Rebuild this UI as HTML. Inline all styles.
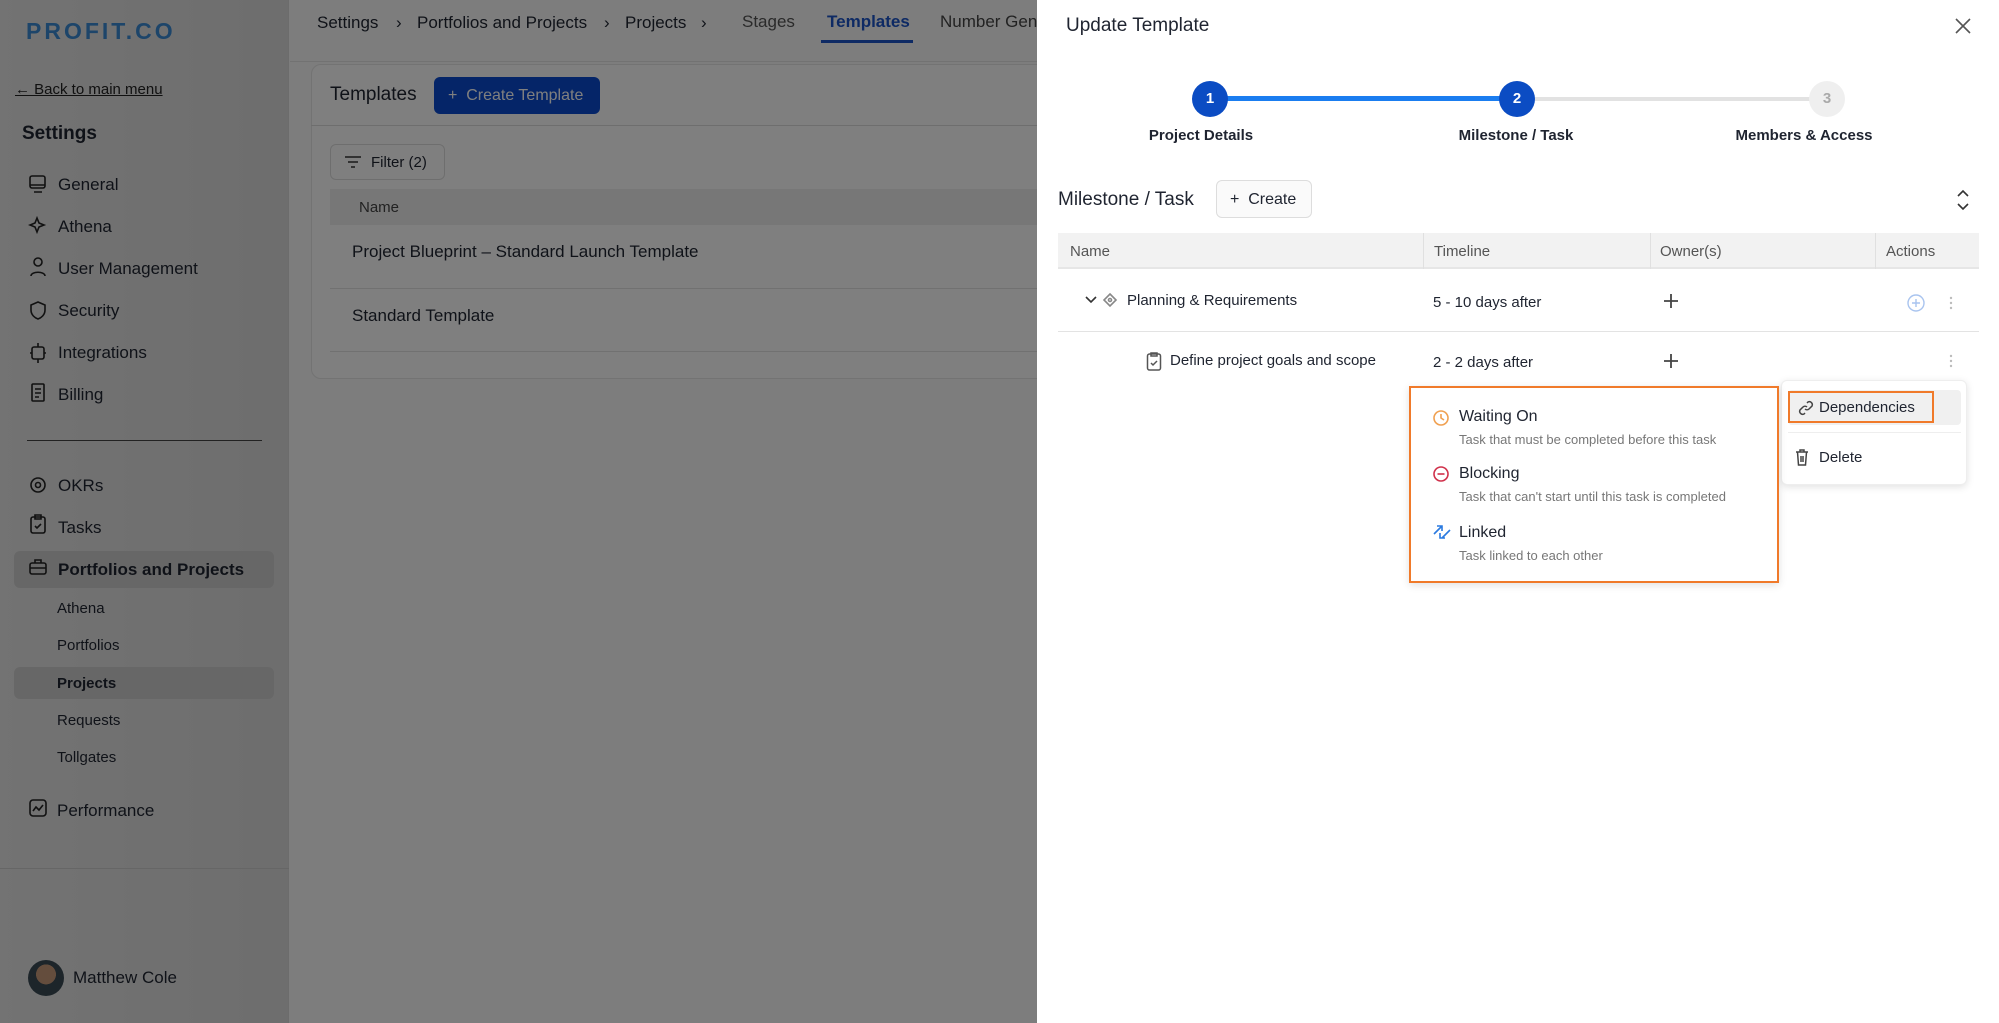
<!DOCTYPE html>
<html><head><meta charset="utf-8"><style>
*{box-sizing:border-box;margin:0;padding:0}
body{width:1999px;height:1023px;overflow:hidden;position:relative;font-family:"Liberation Sans",sans-serif;background:#fafafa;color:#1f2430}
.a{position:absolute;white-space:nowrap}
.t{position:absolute;white-space:nowrap;line-height:26px}
svg{position:absolute}
</style></head><body>
<!-- sidebar -->
<div class="a" style="left:0;top:0;width:289px;height:1023px;background:linear-gradient(90deg,#e6e6e6,#dcdcdc);border-right:1px solid #d8d8d8"></div>
<div class="t" style="left:26px;top:18px;font-size:23px;letter-spacing:3px;color:#3a8ad4;font-weight:bold">PROFIT.CO</div>
<div class="t" style="left:15px;top:77px;font-size:15px;text-decoration:underline;color:#222">← Back to main menu</div>
<div class="t" style="left:22px;top:121px;font-size:19px;font-weight:bold">Settings</div>
<div class="a" style="left:14px;top:551px;width:260px;height:37px;background:#cfcfcf;border-radius:6px"></div>
<div class="a" style="left:14px;top:667px;width:260px;height:32px;background:#cfcfcf;border-radius:6px"></div>
<div style="font-size:17px">
<div class="t" style="left:58px;top:172px">General</div>
<div class="t" style="left:58px;top:214px">Athena</div>
<div class="t" style="left:58px;top:256px">User Management</div>
<div class="t" style="left:58px;top:298px">Security</div>
<div class="t" style="left:58px;top:340px">Integrations</div>
<div class="t" style="left:58px;top:382px">Billing</div>
<div class="t" style="left:58px;top:473px">OKRs</div>
<div class="t" style="left:58px;top:515px">Tasks</div>
<div class="t" style="left:58px;top:557px;font-weight:bold">Portfolios and Projects</div>
<div class="t" style="left:57px;top:798px">Performance</div>
</div>
<div style="font-size:15px">
<div class="t" style="left:57px;top:596px">Athena</div>
<div class="t" style="left:57px;top:633px">Portfolios</div>
<div class="t" style="left:57px;top:671px;font-weight:bold">Projects</div>
<div class="t" style="left:57px;top:708px">Requests</div>
<div class="t" style="left:57px;top:745px">Tollgates</div>
</div>
<svg style="left:28px;top:174px" width="20" height="340" fill="none" stroke="#222" stroke-width="1.6">
<rect x="2" y="2" width="15" height="12" rx="2"/><path d="M6 18h8M2 11h15"/>
<path d="M9 44l2 5 5 2-5 2-2 5-2-5-5-2 5-2z"/>
<circle cx="10" cy="88" r="4"/><path d="M3 102c0-5 14-5 14 0"/>
<path d="M10 128l7 3v5c0 5-4 8-7 9-3-1-7-4-7-9v-5z"/>
<rect x="4" y="173" width="12" height="12" rx="2"/><path d="M10 169v4M10 185v4M2 179h2M16 179h2"/>
<rect x="4" y="210" width="12" height="17" rx="1"/><path d="M7 215h6M7 219h6M7 223h4"/>
<circle cx="10" cy="311" r="7"/><circle cx="10" cy="311" r="2.5"/>
</svg>
<svg style="left:28px;top:505px" width="20" height="320" fill="none" stroke="#222" stroke-width="1.6">
<rect x="3" y="12" width="14" height="16" rx="2"/><path d="M7 10h6v4H7zM7 21l2 2 4-4"/>
<rect x="2" y="58" width="16" height="11" rx="2"/><path d="M7 58v-3h6v3M2 63h16"/>
<rect x="2" y="295" width="16" height="16" rx="3"/><path d="M5 306l3-4 3 3 4-5"/>
</svg>
<div class="a" style="left:27px;top:440px;width:235px;height:1px;background:#444"></div>
<div class="a" style="left:0;top:868px;width:289px;height:1px;background:#ccc"></div>
<div class="a" style="left:28px;top:960px;width:36px;height:36px;border-radius:50%;background:radial-gradient(circle at 50% 40%,#c89a7a 0 35%,#3a4a55 36%)"></div>
<div class="t" style="left:73px;top:965px;font-size:17px">Matthew Cole</div>

<!-- main -->
<div class="a" style="left:290px;top:0;width:750px;height:62px;border-bottom:1px solid #e4e4e4;background:#fbfbfb"></div>
<div style="font-size:17px">
<div class="t" style="left:317px;top:10px">Settings</div>
<div class="t" style="left:396px;top:10px">›</div>
<div class="t" style="left:417px;top:10px">Portfolios and Projects</div>
<div class="t" style="left:604px;top:10px">›</div>
<div class="t" style="left:625px;top:10px">Projects</div>
<div class="t" style="left:701px;top:10px">›</div>
<div class="t" style="left:742px;top:9px;color:#555">Stages</div>
<div class="t" style="left:827px;top:9px;color:#1c55c8;font-weight:bold">Templates</div>
<div class="t" style="left:940px;top:9px;color:#444">Number Generation</div>
</div>
<div class="a" style="left:821px;top:40px;width:92px;height:3px;background:#1c55c8"></div>
<div class="a" style="left:311px;top:64px;width:760px;height:315px;background:#fff;border:1px solid #e6e6e6;border-radius:10px"></div>
<div class="a" style="left:311px;top:125px;width:730px;height:1px;background:#ddd"></div>
<div class="t" style="left:330px;top:82px;font-size:19px">Templates</div>
<div class="a" style="left:434px;top:77px;width:166px;height:37px;background:#0a4bd0;border-radius:6px;color:#fff;font-size:16px;line-height:37px;padding-left:14px">+&nbsp; Create Template</div>
<div class="a" style="left:330px;top:144px;width:115px;height:36px;border:1px solid #ddd;border-radius:6px;font-size:15px;line-height:35px;padding-left:40px">Filter (2)</div>
<svg style="left:344px;top:155px" width="18" height="14" stroke="#333" stroke-width="1.6"><path d="M1 2h16M4 7h10M7 12h4"/></svg>
<div class="a" style="left:330px;top:189px;width:710px;height:36px;background:#eeeeee"></div>
<div class="t" style="left:359px;top:195px;font-size:15px;color:#444">Name</div>
<div class="t" style="left:352px;top:239px;font-size:17px">Project Blueprint – Standard Launch Template</div>
<div class="a" style="left:330px;top:288px;width:710px;height:1px;background:#e3e3e3"></div>
<div class="t" style="left:352px;top:303px;font-size:17px">Standard Template</div>
<div class="a" style="left:330px;top:351px;width:710px;height:1px;background:#e3e3e3"></div>

<!-- overlay -->
<div class="a" style="left:0;top:0;width:1037px;height:1023px;background:rgba(0,0,0,0.5)"></div>

<!-- drawer -->
<div class="a" style="left:1037px;top:0;width:962px;height:1023px;background:#fff"></div>
<div class="t" style="left:1066px;top:13px;font-size:19px">Update Template</div>
<svg style="left:1955px;top:18px" width="16" height="16" stroke="#555" stroke-width="1.6"><path d="M1 1l14 14M15 1L1 15"/></svg>
<div class="a" style="left:1210px;top:96px;width:307px;height:5px;background:#1a7df0"></div>
<div class="a" style="left:1517px;top:97px;width:310px;height:4px;background:#e2e2e2"></div>
<div class="a" style="left:1192px;top:81px;width:36px;height:36px;border-radius:50%;background:#0b4cc3;color:#fff;font-weight:bold;font-size:15px;line-height:36px;text-align:center">1</div>
<div class="a" style="left:1499px;top:81px;width:36px;height:36px;border-radius:50%;background:#0b4cc3;color:#fff;font-weight:bold;font-size:15px;line-height:36px;text-align:center">2</div>
<div class="a" style="left:1809px;top:81px;width:36px;height:36px;border-radius:50%;background:#efefef;color:#aaa;font-weight:bold;font-size:15px;line-height:36px;text-align:center">3</div>
<div style="font-size:15px;font-weight:bold">
<div class="t" style="left:1101px;top:123px;width:200px;text-align:center">Project Details</div>
<div class="t" style="left:1416px;top:123px;width:200px;text-align:center">Milestone / Task</div>
<div class="t" style="left:1704px;top:123px;width:200px;text-align:center">Members &amp; Access</div>
</div>
<div class="t" style="left:1058px;top:187px;font-size:19px">Milestone / Task</div>
<div class="a" style="left:1216px;top:180px;width:96px;height:38px;border:1px solid #ddd;border-radius:6px;font-size:16px;line-height:37px;padding-left:13px;background:#fafafa">+&nbsp; Create</div>
<svg style="left:1956px;top:189px" width="14" height="22" fill="none" stroke="#333" stroke-width="1.6"><path d="M2 7l5-5 5 5M2 15l5 5 5-5"/></svg>
<div class="a" style="left:1058px;top:233px;width:921px;height:36px;background:#f2f2f2;border-bottom:2px solid #e6e6e6"></div>
<div class="a" style="left:1423px;top:233px;width:1px;height:36px;background:#e0e0e0"></div>
<div class="a" style="left:1650px;top:233px;width:1px;height:36px;background:#e0e0e0"></div>
<div class="a" style="left:1875px;top:233px;width:1px;height:36px;background:#e0e0e0"></div>
<div style="font-size:15px;color:#555">
<div class="t" style="left:1070px;top:239px">Name</div>
<div class="t" style="left:1434px;top:239px">Timeline</div>
<div class="t" style="left:1660px;top:239px">Owner(s)</div>
<div class="t" style="left:1886px;top:239px">Actions</div>
</div>
<svg style="left:1085px;top:292px" width="40" height="16" fill="none" stroke="#333" stroke-width="1.6"><path d="M1 5l5 5 5-5"/><path d="M25 2l6 6-6 6-6-6z" stroke="#888"/><circle cx="25" cy="8" r="1.5" stroke="#888"/></svg>
<div class="t" style="left:1127px;top:288px;font-size:15px">Planning &amp; Requirements</div>
<div class="t" style="left:1433px;top:290px;font-size:15px">5 - 10 days after</div>
<svg style="left:1663px;top:293px" width="16" height="16" stroke="#444" stroke-width="1.8"><path d="M8 1v14M1 8h14"/></svg>
<svg style="left:1906px;top:293px" width="52" height="20" fill="none"><circle cx="10" cy="10" r="8" stroke="#a9c4ef" stroke-width="1.4"/><path d="M10 6v8M6 10h8" stroke="#a9c4ef" stroke-width="1.4"/><circle cx="45" cy="5" r="1.2" fill="#bbb"/><circle cx="45" cy="10" r="1.2" fill="#bbb"/><circle cx="45" cy="15" r="1.2" fill="#bbb"/></svg>
<div class="a" style="left:1058px;top:331px;width:921px;height:1px;background:#e3e3e3"></div>
<svg style="left:1146px;top:351px" width="16" height="20" fill="none" stroke="#555" stroke-width="1.5"><rect x="1.5" y="3" width="13" height="16" rx="2"/><path d="M5 2h6v3H5zM5 12l2 2 4-4"/></svg>
<div class="t" style="left:1170px;top:348px;font-size:15px">Define project goals and scope</div>
<div class="t" style="left:1433px;top:350px;font-size:15px">2 - 2 days after</div>
<svg style="left:1663px;top:353px" width="16" height="16" stroke="#444" stroke-width="1.8"><path d="M8 1v14M1 8h14"/></svg>
<svg style="left:1948px;top:353px" width="6" height="20"><circle cx="3" cy="3" r="1.2" fill="#bbb"/><circle cx="3" cy="8" r="1.2" fill="#bbb"/><circle cx="3" cy="13" r="1.2" fill="#bbb"/></svg>

<!-- actions dropdown -->
<div class="a" style="left:1781px;top:380px;width:186px;height:105px;background:#fff;border:1px solid #eee;border-radius:6px;box-shadow:0 2px 8px rgba(0,0,0,0.12)"></div>
<div class="a" style="left:1788px;top:390px;width:173px;height:35px;background:#f0f0f0;border-radius:4px"></div>
<div class="a" style="left:1788px;top:391px;width:146px;height:32px;border:2px solid #f07a2a"></div>
<svg style="left:1798px;top:400px" width="16" height="16" fill="none" stroke="#444" stroke-width="1.5"><path d="M7 9a3 3 0 0 0 4 0l3-3a3 3 0 0 0-4-4l-1 1M9 7a3 3 0 0 0-4 0l-3 3a3 3 0 0 0 4 4l1-1"/></svg>
<div class="t" style="left:1819px;top:395px;font-size:15px">Dependencies</div>
<div class="a" style="left:1788px;top:432px;width:173px;height:1px;background:#eee"></div>
<svg style="left:1795px;top:449px" width="14" height="17" fill="none" stroke="#444" stroke-width="1.5"><path d="M1 3h12M5 3V1h4v2M2.5 3l1 13h7l1-13M6 7v6M8 7v6"/></svg>
<div class="t" style="left:1819px;top:445px;font-size:15px">Delete</div>

<!-- submenu -->
<div class="a" style="left:1409px;top:386px;width:370px;height:197px;background:#fff;border:2px solid #f07a2a;box-shadow:0 2px 8px rgba(0,0,0,0.12)"></div>
<svg style="left:1432px;top:408px" width="22" height="140" fill="none" stroke-width="1.6">
<circle cx="9" cy="10" r="7" stroke="#f0a050"/><path d="M9 6v4l3 2" stroke="#f0a050"/>
<circle cx="9" cy="66" r="7" stroke="#d0304a"/><path d="M5.5 66h7" stroke="#d0304a"/>
<path d="M2 126l8-8M5 118h5v5M18 122l-8 8M8 125v5h5" stroke="#2a7ae0"/>
</svg>
<div class="t" style="left:1459px;top:404px;font-size:16px">Waiting On</div>
<div class="t" style="left:1459px;top:427px;font-size:13px;color:#777">Task that must be completed before this task</div>
<div class="t" style="left:1459px;top:461px;font-size:16px">Blocking</div>
<div class="t" style="left:1459px;top:484px;font-size:13px;color:#777">Task that can't start until this task is completed</div>
<div class="t" style="left:1459px;top:520px;font-size:16px">Linked</div>
<div class="t" style="left:1459px;top:543px;font-size:13px;color:#777">Task linked to each other</div>
</body></html>
